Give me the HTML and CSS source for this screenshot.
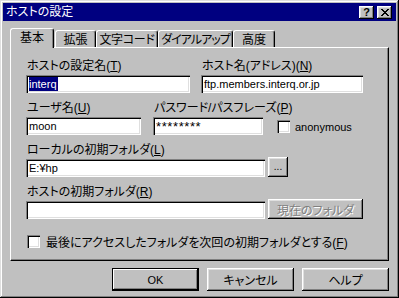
FILE: index.html
```html
<!DOCTYPE html>
<html>

<head>
  <!-- Host settings dialog -->
  <title>ホストの設定</title>
  <link rel="stylesheet" href="styles.css">
</head>

<body>
  <div class="window">
    <!-- Title bar with caption buttons -->
    <div class="titlebar">
      <span class="title">ホストの設定</span>
      <div class="caption">
        <button class="cap-btn help">?</button>
        <button class="cap-btn close">
          <svg width="8" height="7" viewBox="0 0 8 7">
            <path d="M0 0h2v1h1v1h2v-1h1v-1h2v1h-1v1h-1v1h-1v1h1v1h1v1h1v1h-2v-1h-1v-1h-2v1h-1v1h-2v-1h1v-1h1v-1h1v-1h-1v-1h-1v-1h-1z" fill="#000"/>
          </svg>
        </button>
      </div>
    </div>

    <!-- Tabs -->
    <div class="tabs">
      <div class="tab active t1">基本</div>
      <div class="tab t2">拡張</div>
      <div class="tab t3">文字コード</div>
      <div class="tab t4">ダイアルアップ</div>
      <div class="tab t5">高度</div>
    </div>

    <!-- Basic settings page -->
    <div class="panel">
      <div class="row">
        <div class="group g-name">
          <div class="label">ホストの設定名(<u>T</u>)</div>
          <div class="field"><span class="selected">interq</span></div>
        </div>
        <div class="group g-host">
          <div class="label">ホスト名(アドレス)(<u>N</u>)</div>
          <div class="field">ftp.members.interq.or.jp</div>
        </div>
      </div>

      <div class="row">
        <div class="group g-user">
          <div class="label">ユーザ名(<u>U</u>)</div>
          <div class="field">moon</div>
        </div>
        <div class="group g-pass">
          <div class="label">パスワード/パスフレーズ(<u>P</u>)</div>
          <div class="field secret">********</div>
        </div>
        <div class="check anon">
          <span class="box"></span>
          <span class="latin">anonymous</span>
        </div>
      </div>

      <div class="row">
        <div class="group g-wide">
          <div class="label">ローカルの初期フォルダ(<u>L</u>)</div>
          <div class="field">E:¥hp</div>
        </div>
        <button class="btn browse">...</button>
      </div>

      <div class="row">
        <div class="group g-wide">
          <div class="label">ホストの初期フォルダ(<u>R</u>)</div>
          <div class="field"></div>
        </div>
        <button class="btn current" disabled>現在のフォルダ</button>
      </div>

      <div class="check last">
        <span class="box"></span>
        <span>最後にアクセスしたフォルダを次回の初期フォルダとする(<u>F</u>)</span>
      </div>
    </div>

    <!-- Dialog buttons -->
    <div class="actions">
      <button class="btn action default">OK</button>
      <button class="btn action">キャンセル</button>
      <button class="btn action">ヘルプ</button>
    </div>
  </div>
</body>

</html>
```

FILE: styles.css
```css
/* Reset and base font */
* {
  margin: 0;
  padding: 0;
  box-sizing: border-box;
}

body {
  background: #c0c0c0;
  font-family: "Liberation Sans", "Noto Sans CJK JP", sans-serif;
  font-size: 12px;
  font-feature-settings: "palt";
  color: #000;
}

button {
  font-family: inherit;
  font-feature-settings: "palt";
  color: #000;
  white-space: nowrap;
}

/* Window frame */
.window {
  width: 399px;
  height: 298px;
  padding: 3px;
  background: #c0c0c0;
  box-shadow: inset -1px -1px #000, inset 1px 1px #dfdfdf,
    inset -2px -2px #808080, inset 2px 2px #fff;
}

/* Title bar */
.titlebar {
  height: 18px;
  background: #000080;
  color: #fff;
  display: flex;
  align-items: center;
  justify-content: space-between;
  padding: 0 4px 0 3px;
}

.title {
  line-height: 14px;
}

.caption {
  display: flex;
  gap: 3px;
}

.cap-btn {
  width: 15px;
  height: 13px;
  border: 0;
  background: #c0c0c0;
  box-shadow: inset -1px -1px #000, inset 1px 1px #fff,
    inset -2px -2px #808080, inset 2px 2px #dfdfdf;
  display: flex;
  align-items: center;
  justify-content: center;
  font-family: "Liberation Sans", sans-serif;
  font-weight: bold;
  font-size: 11px;
  line-height: 11px;
}

/* Tabs */
.tabs {
  display: flex;
  align-items: flex-end;
  height: 19px;
  margin: 7px 0 0 7px;
}

.tab {
  height: 17px;
  border: 1px solid;
  border-color: #fff #000 transparent #fff;
  border-bottom: 0;
  border-radius: 3px 3px 0 0;
  box-shadow: inset -1px 0 #808080;
  text-align: center;
  line-height: 16px;
  padding-top: 1px;
  white-space: nowrap;
}

.tab.active {
  height: 20px;
  margin-bottom: -1px;
  position: relative;
  z-index: 1;
  background: #c0c0c0;
  line-height: 17px;
}

.t1 { width: 44px; margin-right: 1px; }
.t2 { width: 41px; }
.t3 { width: 62px; letter-spacing: -0.3px; }
.t4 { width: 75px; letter-spacing: -1px; }
.t5 { width: 42px; }

/* Page panel */
.panel {
  height: 214px;
  margin: 0 7px;
  border: 1px solid;
  border-color: #fff #000 #000 #fff;
  box-shadow: inset -1px -1px #808080;
  padding: 11px 15px 0;
}

.row {
  display: flex;
  align-items: flex-end;
  margin-bottom: 8px;
}

.label {
  height: 14px;
  line-height: 14px;
  margin-bottom: 2px;
  padding-left: 1px;
  white-space: nowrap;
}

.field {
  height: 18px;
  background: #fff;
  box-shadow: inset 1px 1px #808080, inset 2px 2px #000,
    inset -1px -1px #fff, inset -2px -2px #dfdfdf;
  padding-left: 3px;
  font-size: 11px;
  line-height: 18px;
  white-space: nowrap;
}

.field.secret {
  font-size: 13px;
  letter-spacing: 0.6px;
  line-height: 20px;
}

.selected {
  background: #000080;
  color: #fff;
  padding: 1px 1px 1px 0;
}

.g-name { width: 164px; margin-right: 11px; }
.g-host { width: 162px; }
.g-user { width: 115px; margin-right: 12px; }
.g-pass { width: 110px; margin-right: 14px; }
.g-wide { width: 239px; margin-right: 3px; }

/* Check boxes */
.check {
  display: flex;
  align-items: center;
  white-space: nowrap;
}

.box {
  width: 13px;
  height: 13px;
  flex: none;
  background: #fff;
  box-shadow: inset 1px 1px #808080, inset 2px 2px #000,
    inset -1px -1px #fff, inset -2px -2px #dfdfdf;
}

.anon {
  gap: 5px;
  margin-bottom: 2px;
}

.latin {
  font-size: 11px;
}

.last {
  gap: 6px;
  margin-top: 14px;
  padding-left: 1px;
}

/* Push buttons */
.btn {
  border: 0;
  background: #c0c0c0;
  box-shadow: inset -1px -1px #000, inset 1px 1px #fff,
    inset -2px -2px #808080, inset 2px 2px #dfdfdf;
  font-size: 12px;
}

.browse {
  width: 20px;
  height: 20px;
  font-size: 10px;
  line-height: 14px;
}

.current {
  width: 95px;
  height: 20px;
  color: #808080;
  text-shadow: 1px 1px #fff;
}

.actions {
  display: flex;
  justify-content: flex-end;
  gap: 8px;
  margin: 7px 7px 0 0;
}

.action {
  width: 87px;
  height: 23px;
}

.action.default {
  font-size: 11px;
  box-shadow: inset 0 0 0 1px #000, inset -2px -2px #000, inset 2px 2px #fff,
    inset -3px -3px #808080;
}
```
